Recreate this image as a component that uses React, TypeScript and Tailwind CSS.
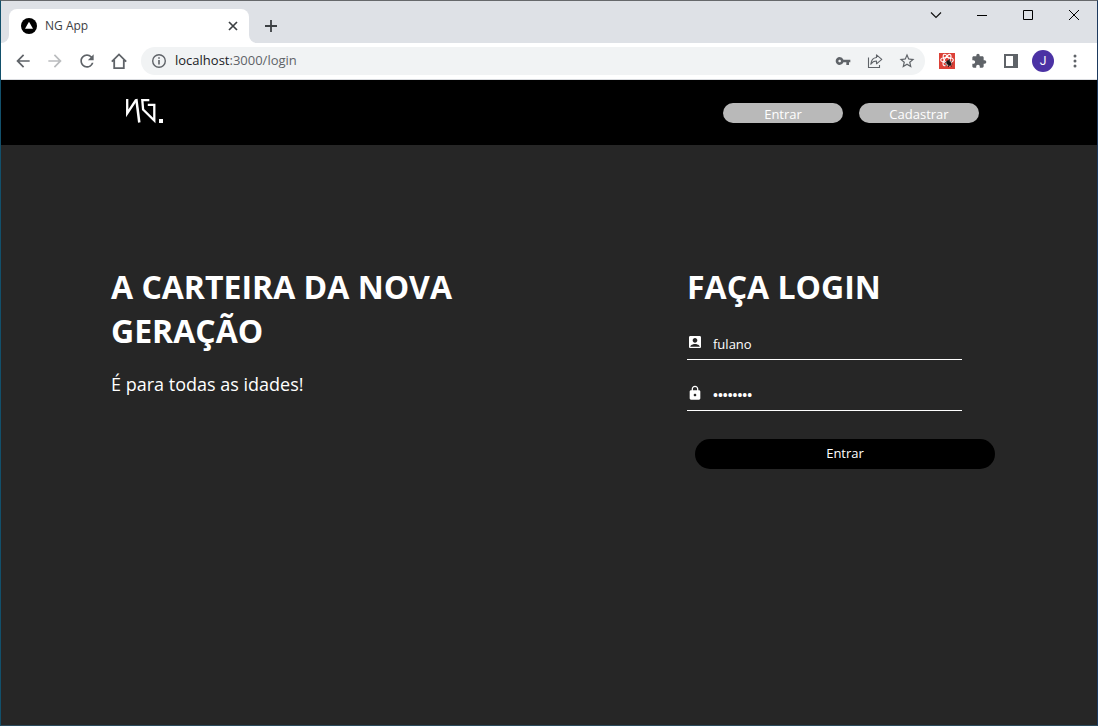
import React from "react";
import { MdAccountBox, MdArrowBack, MdArrowForward, MdExtension, MdLock, MdRefresh, MdStarOutline, MdVpnKey } from "react-icons/md";

const iconButton = "flex h-8 w-8 shrink-0 items-center justify-center text-[#5f6368]";
const captionButton = "flex h-7 w-[46px] items-center justify-center text-black";

function TabFoot({ side }: { side: "left" | "right" }) {
  return (
    <span className="h-2 w-2 shrink-0 bg-white">
      <span className={side === "left" ? "block h-2 w-2 rounded-br-lg bg-[#dee1e6]" : "block h-2 w-2 rounded-bl-lg bg-[#dee1e6]"} />
    </span>
  );
}

function TabStrip() {
  return (
    <div className="flex h-[42px] justify-between bg-[#dee1e6]">
      <div className="flex items-end">
        <TabFoot side="left" />
        <div className="flex h-[34px] w-60 items-center rounded-t-lg bg-white pr-2 pl-3">
          <svg width="16" height="16" viewBox="0 0 16 16" aria-hidden="true">
            <circle cx="8" cy="8" r="8" fill="#000" />
            <path d="M8 3.8 12 10.8H4z" fill="#fff" />
          </svg>
          <span className="ml-2 flex-1 text-[12px] text-[#3c4043]">NG App</span>
          <button aria-label="Fechar guia" className="flex h-4 w-4 items-center justify-center">
            <svg width="10" height="10" viewBox="0 0 10 10" stroke="#3c4043" strokeWidth="1.7">
              <path d="M1 1l8 8M9 1L1 9" />
            </svg>
          </button>
        </div>
        <TabFoot side="right" />
        <button aria-label="Nova guia" className="flex h-[34px] w-7 items-center justify-center">
          <svg width="12" height="12" viewBox="0 0 12 12" stroke="#3c4043" strokeWidth="1.8">
            <path d="M6 0v12M0 6h12" />
          </svg>
        </button>
      </div>
      <div className="flex">
        <button aria-label="Pesquisar guias" className={captionButton}>
          <svg width="12" height="12" viewBox="0 0 12 12" fill="none" stroke="#111" strokeWidth="1.2">
            <path d="M1 3.5l5 5 5-5" />
          </svg>
        </button>
        <button aria-label="Minimizar" className={captionButton}>
          <svg width="10" height="10" viewBox="0 0 10 10" stroke="#000">
            <path d="M0 5.5h10" />
          </svg>
        </button>
        <button aria-label="Maximizar" className={captionButton}>
          <svg width="10" height="10" viewBox="0 0 10 10" fill="none" stroke="#000">
            <path d="M.5.5h9v9h-9z" />
          </svg>
        </button>
        <button aria-label="Fechar" className={captionButton}>
          <svg width="10" height="10" viewBox="0 0 10 10" stroke="#000">
            <path d="M0 0l10 10M10 0L0 10" />
          </svg>
        </button>
      </div>
    </div>
  );
}

function ReactBugIcon() {
  return (
    <svg width="16" height="16" viewBox="0 0 16 16" fill="none">
      <path d="M0 0h16v16H0z" fill="#dc4137" />
      <g stroke="#fff" strokeWidth="1.1">
        <ellipse cx="8" cy="7" rx="6.3" ry="2.5" />
        <ellipse cx="8" cy="7" rx="6.3" ry="2.5" transform="rotate(60 8 7)" />
        <ellipse cx="8" cy="7" rx="6.3" ry="2.5" transform="rotate(120 8 7)" />
      </g>
      <path d="M7.500 8l2-1 2.500 2.500v2.500l-1.500 1-3-2.500z" fill="#151515" />
      <path d="M6 9.500l2 .5M6.500 12.500l2-1M9.500 14v-2M10.500 6v2M12.500 8l-1.500 1.500M13.500 11h-2M12.500 13.500l-1-1.500" stroke="#151515" strokeWidth=".8" />
    </svg>
  );
}

function Toolbar() {
  return (
    <div className="flex h-[37px] items-center border-b border-[#dadce0] bg-white px-1.5">
      <button aria-label="Voltar" className={iconButton}><MdArrowBack size={20} /></button>
      <button aria-label="Avançar" className="flex h-8 w-8 shrink-0 items-center justify-center text-[#babcbe]"><MdArrowForward size={20} /></button>
      <button aria-label="Atualizar" className={iconButton}><MdRefresh size={20} /></button>
      <button aria-label="Página inicial" className={iconButton}>
        <svg width="16" height="16" viewBox="0 0 16 16" fill="none" stroke="currentColor" strokeWidth="1.8">
          <path d="M.8 8.600L8 1.400l7.200 7.200M3.200 7v8.100h9.600V7" />
        </svg>
      </button>
      <div className="ml-1.5 flex h-7 flex-1 items-center rounded-full bg-[#f1f3f4] pr-0.5 pl-2.5">
        <svg width="16" height="16" viewBox="0 0 16 16" fill="none" stroke="#5f6368" strokeWidth="1.4" aria-hidden="true">
          <circle cx="8" cy="8" r="6.300" />
          <path d="M8 7v4.500M8 4.300v1.500" strokeWidth="1.6" />
        </svg>
        <p className="ml-2 flex-1 text-[13px] text-[#5f6368]"><span className="text-[#202124]">localhost</span>:3000/login</p>
        <button aria-label="Senhas" className={iconButton}><MdVpnKey size={16} /></button>
        <button aria-label="Compartilhar" className={iconButton}>
          <svg width="16" height="16" viewBox="0 0 16 16" fill="none" stroke="currentColor" strokeWidth="1.1">
            <path d="M1.500 4.500v10h11V12" />
            <path d="M9.500 1.800v2.700C6 4.900 4.200 7.200 3.800 11.200c1.400-2.200 3.200-3.200 5.700-3.200v2.800L14.800 6.300z" strokeLinejoin="round" />
          </svg>
        </button>
        <button aria-label="Adicionar aos favoritos" className={iconButton}><MdStarOutline size={18} /></button>
      </div>
      <button aria-label="Extensão React" className="ml-1.5 flex h-8 w-8 shrink-0 items-center justify-center"><ReactBugIcon /></button>
      <button aria-label="Extensões" className={iconButton}><MdExtension size={16} /></button>
      <button aria-label="Painel lateral" className={iconButton}>
        <svg width="14" height="14" viewBox="0 0 14 14" fill="none" stroke="currentColor" strokeWidth="2">
          <path d="M1 1h12v12H1z" />
          <path d="M9 1h4v12H9z" fill="currentColor" stroke="none" />
        </svg>
      </button>
      <button aria-label="Perfil" className="flex h-8 w-8 shrink-0 items-center justify-center">
        <span className="flex h-[22px] w-[22px] items-center justify-center rounded-full bg-[#4b32a4] font-['Roboto'] text-[12px] text-white">J</span>
      </button>
      <button aria-label="Menu" className={iconButton}>
        <svg width="4" height="14" viewBox="0 0 4 14" fill="currentColor">
          <circle cx="2" cy="2" r="1.500" />
          <circle cx="2" cy="7" r="1.500" />
          <circle cx="2" cy="12" r="1.500" />
        </svg>
      </button>
    </div>
  );
}

function Logo() {
  return (
    <svg width="38" height="26" viewBox="0 0 38 26" fill="none" stroke="#fff" role="img" aria-label="NG">
      <path d="M2.200 1v14.500L11 2" strokeWidth="2.300" />
      <path d="M11.300 1l3 23.500" strokeWidth="2.500" />
      <path d="M24.300 2.200H17.300l.8 9.300L29.300 22.500V6.800H22.800" strokeWidth="2.300" />
      <path d="M34 21h4v4h-4z" fill="#fff" stroke="none" />
    </svg>
  );
}

function SiteHeader() {
  return (
    <header className="flex h-[65px] items-center justify-between bg-black pr-[118px] pl-[124px]">
      <a href="#inicio" className="-mt-1"><Logo /></a>
      <nav className="flex gap-4 text-[13px] leading-5 text-white">
        <button className="h-5 w-[120px] rounded-full bg-[#b9b9b9] pt-px">Entrar</button>
        <button className="h-5 w-[120px] rounded-full bg-[#b9b9b9] pt-px">Cadastrar</button>
      </nav>
    </header>
  );
}

function LoginForm() {
  return (
    <form className="w-[308px] shrink-0" onSubmit={(event) => event.preventDefault()}>
      <h2 className="text-[32px] leading-[44px] font-bold">FAÇA LOGIN</h2>
      <div className="flex h-[51px] w-[275px] items-end">
        <div className="flex h-9 w-full items-center border-b border-white">
          <label htmlFor="user" aria-label="Usuário"><MdAccountBox size={16} /></label>
          <input id="user" type="text" defaultValue="fulano" className="ml-2 h-8 min-w-0 flex-1 bg-transparent px-0.5 pt-1 text-[13px] outline-none" />
        </div>
      </div>
      <div className="flex h-[51px] w-[275px] items-end">
        <div className="flex h-9 w-full items-center border-b border-white">
          <label htmlFor="password" aria-label="Senha"><MdLock size={16} /></label>
          <input id="password" type="password" defaultValue="12345678" className="ml-2 h-8 min-w-0 flex-1 bg-transparent px-0.5 pt-1 text-[13px] font-bold outline-none" />
        </div>
      </div>
      <button className="mt-7 ml-2 h-[30px] w-[300px] rounded-full bg-black text-[13px]">Entrar</button>
    </form>
  );
}

export default function App() {
  return (
    <div className="flex min-h-screen flex-col border border-t-[#66686b] border-r-[#1d3a5f] border-b-[#2a4a5c] border-l-[#12506b] bg-[#262626] font-['Open_Sans',sans-serif]">
      <TabStrip />
      <Toolbar />
      <SiteHeader />
      <main className="flex flex-1 justify-between pt-[120px] pr-[102px] pl-[110px] text-white">
        <section className="w-[400px]">
          <h1 className="text-[32px] leading-[44px] font-bold">A CARTEIRA DA NOVA GERAÇÃO</h1>
          <p className="mt-4 text-[18px] leading-[30px]">É para todas as idades!</p>
        </section>
        <LoginForm />
      </main>
    </div>
  );
}
